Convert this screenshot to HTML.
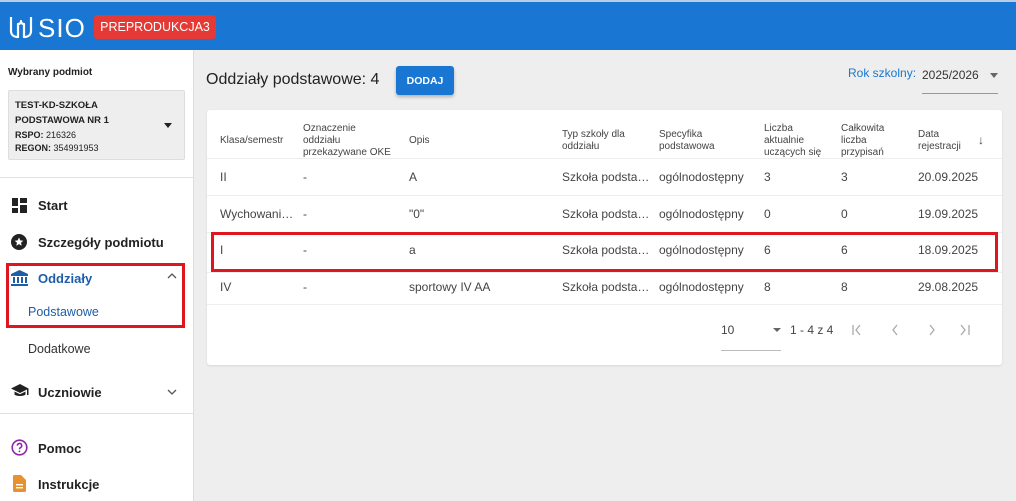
<!DOCTYPE html>
<html><head><meta charset="utf-8"><style>
*{box-sizing:border-box;margin:0;padding:0}
body{width:1016px;height:501px;overflow:hidden;background:#eeeeee;font-family:"Liberation Sans",sans-serif;color:#333;position:relative}
.top{position:absolute;left:0;top:0;width:1016px;height:50px;background:#1976d2;border-top:2px solid #b8cde6}
.logo{position:absolute;left:38px;top:11px;color:#fff;font-size:26px;letter-spacing:1px}
.badge{position:absolute;left:94px;top:13px;height:24px;width:122px;background:#e53935;color:#fff;border-radius:3px;font-size:12.5px;line-height:24px;text-align:center;white-space:nowrap}
.side{position:absolute;left:0;top:50px;width:194px;height:451px;background:#fff;border-right:1px solid #ddd}
.abs{position:absolute}
.s{font-size:13px;font-weight:bold;color:#222}
.card{position:absolute;left:207px;top:110px;width:795px;height:255px;background:#fff;border-radius:3px;box-shadow:0 1px 2px rgba(0,0,0,.1)}
.h{position:absolute;font-size:10px;color:#444;line-height:12px}
.c{position:absolute;font-size:12px;color:#444}
.line{position:absolute;left:0;width:795px;height:1px;background:#eee}
.red{position:absolute;border:3px solid #e0161e}
</style></head><body>
<div class="top">
<svg class="abs" style="left:9px;top:12px" width="24" height="26" viewBox="0 0 24 26"><path d="M2 3v14c0 4 3 6 7 6V10c2 0 3-1 3-3 0 2 1 3 3 3v13c4 0 7-2 7-6V3" fill="none" stroke="#fff" stroke-width="2.2" stroke-linejoin="round"/></svg>
<div class="logo">SIO</div>
<div class="badge">PREPRODUKCJA3</div>
</div>
<div class="side">
<div class="abs" style="left:8px;top:17px;font-size:10px;font-weight:bold;color:#222">Wybrany podmiot</div>
<div class="abs" style="left:8px;top:40px;width:177px;height:70px;background:#eee;border:1px solid #ddd;border-radius:2px"></div>
<div class="abs" style="left:15px;top:48px;font-size:9.5px;font-weight:bold;line-height:15px;color:#222">TEST-KD-SZKOŁA<br>PODSTAWOWA NR 1</div>
<div class="abs" style="left:15px;top:79px;font-size:9px;line-height:13px;color:#222"><b>RSPO:</b> 216326<br><b>REGON:</b> 354991953</div>
<div class="abs" style="left:164px;top:73px;width:0;height:0;border-left:4px solid transparent;border-right:4px solid transparent;border-top:5px solid #222"></div>
<div class="abs" style="left:0;top:127px;width:193px;height:1px;background:#e0e0e0"></div>
<svg class="abs" style="left:12px;top:148px" width="15" height="15" viewBox="0 0 15 15"><rect x="0" y="0" width="6" height="8" fill="#222"/><rect x="8" y="0" width="7" height="5" fill="#222"/><rect x="0" y="10" width="6" height="5" fill="#222"/><rect x="8" y="7" width="7" height="8" fill="#222"/></svg>
<div class="abs s" style="left:38px;top:148px">Start</div>
<svg class="abs" style="left:11px;top:184px" width="16" height="16" viewBox="0 0 16 16"><circle cx="8" cy="8" r="8" fill="#222"/><path d="M8 3.5l1.3 2.9 3 .3-2.3 2 .7 3-2.7-1.6-2.7 1.6.7-3-2.3-2 3-.3z" fill="#fff"/></svg>
<div class="abs s" style="left:38px;top:185px">Szczegóły podmiotu</div>
<svg class="abs" style="left:11px;top:220px" width="17" height="16" viewBox="0 0 17 16"><path d="M8.5 0L0 4v2h17V4z" fill="#1e5ea8"/><rect x="2" y="7" width="2" height="6" fill="#1e5ea8"/><rect x="6" y="7" width="2" height="6" fill="#1e5ea8"/><rect x="10" y="7" width="2" height="6" fill="#1e5ea8"/><rect x="14" y="7" width="2" height="6" fill="#1e5ea8"/><rect x="0" y="14" width="17" height="2" fill="#1e5ea8"/></svg>
<div class="abs s" style="left:38px;top:221px;color:#1e5ea8">Oddziały</div>
<svg class="abs" style="left:167px;top:222px" width="10" height="7"><path d="M1 6l4-4 4 4" fill="none" stroke="#555" stroke-width="1.3"/></svg>
<div class="abs" style="left:28px;top:255px;font-size:12.5px;color:#1e5ea8">Podstawowe</div>
<div class="abs" style="left:28px;top:292px;font-size:12.5px;color:#333">Dodatkowe</div>
<svg class="abs" style="left:11px;top:334px" width="18" height="14" viewBox="0 0 18 14"><path d="M9 0L0 4.5 9 9l7-3.5V11h1.5V4.5z" fill="#222"/><path d="M3.5 7.5v3c1.5 2 9.5 2 11 0v-3L9 10.3z" fill="#222"/></svg>
<div class="abs s" style="left:38px;top:335px">Uczniowie</div>
<svg class="abs" style="left:167px;top:339px" width="10" height="7"><path d="M1 1l4 4 4-4" fill="none" stroke="#555" stroke-width="1.3"/></svg>
<div class="abs" style="left:0;top:363px;width:193px;height:1px;background:#e0e0e0"></div>
<svg class="abs" style="left:11px;top:389px" width="17" height="17" viewBox="0 0 17 17"><circle cx="8.5" cy="8.5" r="7.3" fill="none" stroke="#8e24aa" stroke-width="1.6"/><path d="M6.3 6.6a2.2 2.2 0 1 1 3.2 2c-.8.4-1 .8-1 1.6" fill="none" stroke="#8e24aa" stroke-width="1.5"/><circle cx="8.5" cy="12.4" r=".9" fill="#8e24aa"/></svg>
<div class="abs s" style="left:38px;top:391px">Pomoc</div>
<svg class="abs" style="left:13px;top:425px" width="13" height="17" viewBox="0 0 13 17"><path d="M0 1.5Q0 0 1.5 0H8l5 5v10.5Q13 17 11.5 17h-10Q0 17 0 15.5z" fill="#e8912d"/><rect x="3" y="9" width="7" height="1.4" fill="#fff"/><rect x="3" y="12" width="7" height="1.4" fill="#fff"/></svg>
<div class="abs s" style="left:38px;top:427px">Instrukcje</div>
</div>
<div class="red" style="left:6px;top:263px;width:179px;height:65px"></div>

<div class="abs" style="left:206px;top:71px;font-size:16px;color:#222">Oddziały podstawowe: 4</div>
<div class="abs" style="left:396px;top:66px;width:58px;height:29px;background:#1976d2;color:#fff;font-size:10.5px;font-weight:bold;display:flex;align-items:center;justify-content:center;border-radius:3px;box-shadow:0 2px 3px rgba(0,0,0,.25)">DODAJ</div>
<div class="abs" style="left:848px;top:66px;font-size:12px;color:#1976d2">Rok szkolny:</div>
<div class="abs" style="left:922px;top:68px;font-size:12px;color:#333">2025/2026</div>
<div class="abs" style="left:990px;top:73px;border-left:4px solid transparent;border-right:4px solid transparent;border-top:5px solid #666"></div>
<div class="abs" style="left:922px;top:93px;width:76px;height:1px;background:#999"></div>

<div class="card">
<div class="h" style="left:13px;top:25px">Klasa/semestr</div>
<div class="h" style="left:96px;top:13px">Oznaczenie<br>oddziału<br>przekazywane OKE</div>
<div class="h" style="left:202px;top:25px">Opis</div>
<div class="h" style="left:355px;top:19px">Typ szkoły dla<br>oddziału</div>
<div class="h" style="left:452px;top:19px">Specyfika<br>podstawowa</div>
<div class="h" style="left:557px;top:13px">Liczba<br>aktualnie<br>uczących się</div>
<div class="h" style="left:634px;top:13px">Całkowita<br>liczba<br>przypisań</div>
<div class="h" style="left:711px;top:19px">Data<br>rejestracji</div>
<div class="h" style="left:771px;top:24px;font-size:12px">↓</div>
<div class="line" style="top:48px"></div>
<div class="line" style="top:85px"></div>
<div class="line" style="top:122px"></div>
<div class="line" style="top:162px"></div>
<div class="line" style="top:194px"></div>

<div class="c" style="left:13px;top:60px">II</div><div class="c" style="left:96px;top:60px">-</div><div class="c" style="left:202px;top:60px">A</div><div class="c" style="left:355px;top:60px">Szkoła podsta…</div><div class="c" style="left:452px;top:60px">ogólnodostępny</div><div class="c" style="left:557px;top:60px">3</div><div class="c" style="left:634px;top:60px">3</div><div class="c" style="left:711px;top:60px">20.09.2025</div>
<div class="c" style="left:13px;top:97px">Wychowani…</div><div class="c" style="left:96px;top:97px">-</div><div class="c" style="left:202px;top:97px">"0"</div><div class="c" style="left:355px;top:97px">Szkoła podsta…</div><div class="c" style="left:452px;top:97px">ogólnodostępny</div><div class="c" style="left:557px;top:97px">0</div><div class="c" style="left:634px;top:97px">0</div><div class="c" style="left:711px;top:97px">19.09.2025</div>
<div class="c" style="left:13px;top:133px">I</div><div class="c" style="left:96px;top:133px">-</div><div class="c" style="left:202px;top:133px">a</div><div class="c" style="left:355px;top:133px">Szkoła podsta…</div><div class="c" style="left:452px;top:133px">ogólnodostępny</div><div class="c" style="left:557px;top:133px">6</div><div class="c" style="left:634px;top:133px">6</div><div class="c" style="left:711px;top:133px">18.09.2025</div>
<div class="c" style="left:13px;top:170px">IV</div><div class="c" style="left:96px;top:170px">-</div><div class="c" style="left:202px;top:170px">sportowy IV AA</div><div class="c" style="left:355px;top:170px">Szkoła podsta…</div><div class="c" style="left:452px;top:170px">ogólnodostępny</div><div class="c" style="left:557px;top:170px">8</div><div class="c" style="left:634px;top:170px">8</div><div class="c" style="left:711px;top:170px">29.08.2025</div>

<div class="c" style="left:514px;top:213px">10</div>
<div class="abs" style="left:566px;top:218px;border-left:4px solid transparent;border-right:4px solid transparent;border-top:4px solid #666"></div>
<div class="abs" style="left:514px;top:240px;width:60px;height:1px;background:#bbb"></div>
<div class="c" style="left:583px;top:213px">1 - 4 z 4</div>
<svg class="abs" style="left:645px;top:214px" width="130" height="12" viewBox="0 0 130 12"><g fill="none" stroke="#aaa" stroke-width="1.3"><path d="M1 1v10M8 1l-4 5 4 5"/><path d="M45 1l-4 5 4 5"/><path d="M78 1l4 5-4 5"/><path d="M109 1l4 5-4 5M117 1v10"/></g></svg>
</div>
<div class="red" style="left:211px;top:232px;width:787px;height:40px"></div>
</body></html>
